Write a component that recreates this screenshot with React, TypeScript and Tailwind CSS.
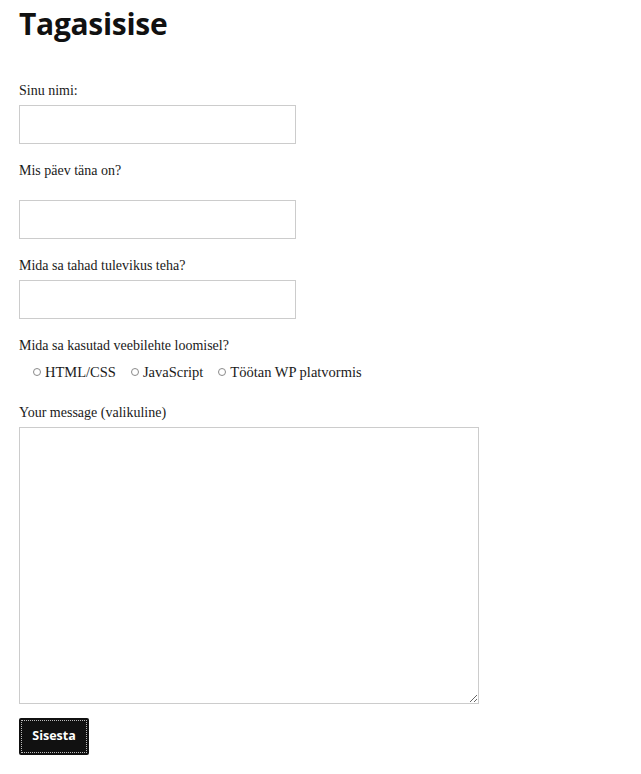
import React from 'react';

const serif = { fontFamily: '"Liberation Serif", "DejaVu Serif", serif' };

function Label({ children, className = '' }: { children: React.ReactNode; className?: string }) {
  return (
    <div className={`text-[14px] leading-[20px] text-[#1a1a1a] ${className}`}>{children}</div>
  );
}

function TextInput({ className = '' }: { className?: string }) {
  return (
    <input
      type="text"
      className={`block w-[277px] h-[39px] border border-[#cccccc] bg-white outline-none ${className}`}
    />
  );
}

function Radio({ label }: { label: string }) {
  return (
    <label className="flex items-center gap-[4px] text-[14.5px] leading-[20px] text-[#1a1a1a]">
      <span className="w-[8px] h-[8px] rounded-full border border-[#8a8a8a] bg-white" />
      {label}
    </label>
  );
}

export default function App() {
  return (
    <div className="min-h-screen bg-white px-[19px] pt-[4px] pb-8" style={serif}>
      <h1
        className="text-[30px] leading-[40px] font-bold text-[#111] tracking-[-0.3px]"
        style={{ fontFamily: '"Open Sans", "Noto Sans", sans-serif' }}
      >
        Tagasisise
      </h1>

      <form onSubmit={(e) => e.preventDefault()}>
        <Label className="mt-[37px]">Sinu nimi:</Label>
        <TextInput className="mt-[4px]" />

        <Label className="mt-[17px]">Mis päev täna on?</Label>
        <TextInput className="mt-[19px]" />

        <Label className="mt-[17px]">Mida sa tahad tulevikus teha?</Label>
        <TextInput className="mt-[4px]" />

        <Label className="mt-[17px]">Mida sa kasutad veebilehte loomisel?</Label>
        <div className="mt-[6px] pl-[14px] flex items-center gap-[15px]">
          <Radio label="HTML/CSS" />
          <Radio label="JavaScript" />
          <Radio label="Töötan WP platvormis" />
        </div>

        <Label className="mt-[21px]">Your message (valikuline)</Label>
        <textarea className="block mt-[4px] w-[460px] h-[277px] border border-[#cccccc] bg-white outline-none" />

        <button
          type="submit"
          className="mt-[14px] block w-[70px] h-[37px] rounded-[2px] bg-[#111111] p-[2px]"
          style={{ fontFamily: '"Open Sans", "Noto Sans", sans-serif' }}
        >
          <span className="flex h-full w-full items-center justify-center border border-dotted border-[#bbbbbb] text-[12.5px] font-bold text-white">
            Sisesta
          </span>
        </button>
      </form>
    </div>
  );
}
